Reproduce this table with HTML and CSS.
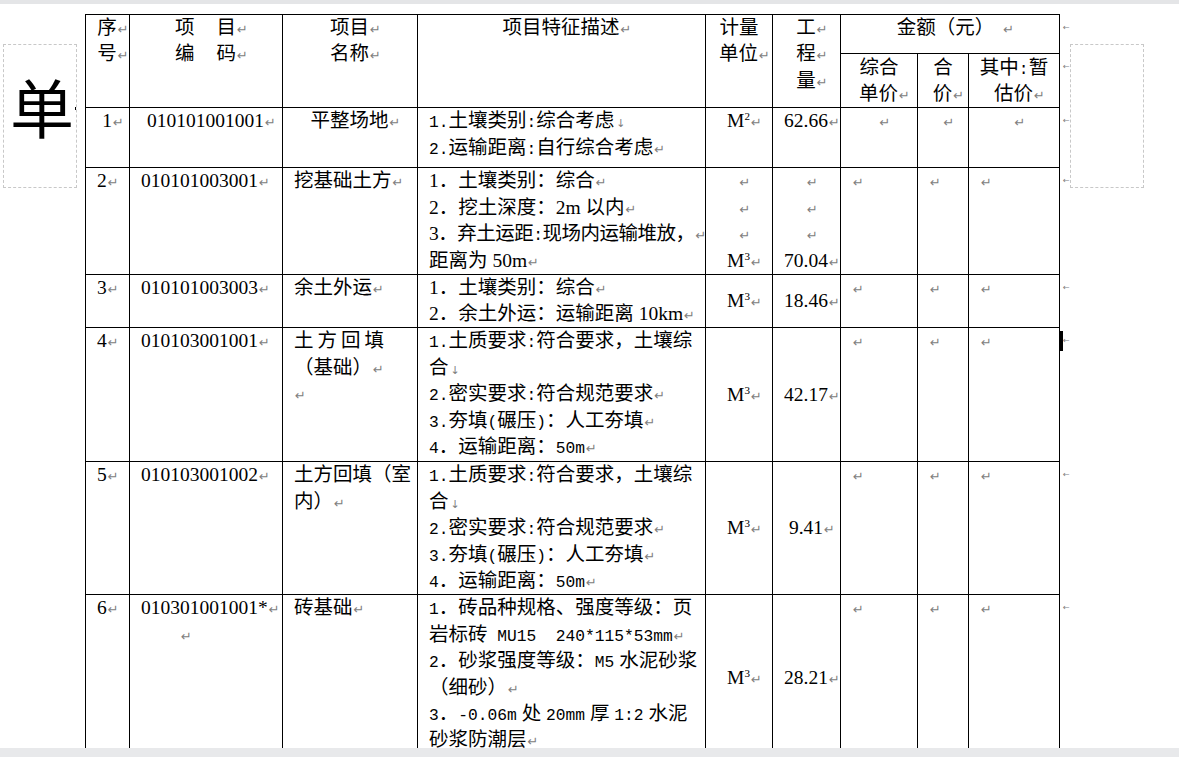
FILE: index.html
```html
<!DOCTYPE html>
<html lang="zh-CN">
<head>
<meta charset="utf-8">
<title>分部分项工程量清单</title>
<link rel="stylesheet" href="styles.css">
</head>
<body>
<div class="topbar"></div>
<div class="page">
  <div class="side side-left">
    <div class="tbox tbox-title"><span class="big">单</span><span class="dot"></span></div>
  </div>
  <table class="bill">
    <colgroup>
      <col class="w1"><col class="w2"><col class="w3"><col class="w4"><col class="w5"><col class="w6"><col class="w7"><col class="w8"><col class="w9"><col class="wm">
    </colgroup>
    <thead>
      <tr class="ha">
        <th rowspan="2">序<span class="pm">↵</span><br>号<span class="pm">↵</span></th>
        <th rowspan="2">项<span class="gap"></span>目<span class="pm">↵</span><br>编<span class="gap"></span>码<span class="pm">↵</span></th>
        <th rowspan="2">项目<span class="pm">↵</span><br>名称<span class="pm">↵</span></th>
        <th rowspan="2">项目特征描述<span class="pm">↵</span></th>
        <th rowspan="2">计量<br>单位<span class="pm">↵</span></th>
        <th rowspan="2">工<span class="pm">↵</span><br>程<span class="pm">↵</span><br>量<span class="pm">↵</span></th>
        <th colspan="3">金额（元）<span class="pm pm-far">↵</span></th>
        <td class="m"><span class="rm">←</span></td>
      </tr>
      <tr class="hb">
        <th class="sub">综合<br>单价<span class="pm">↵</span></th>
        <th class="sub">合<br>价<span class="pm">↵</span></th>
        <th class="sub">其中<span class="h">:</span>暂<br>估价<span class="pm">↵</span></th>
        <td class="m"><span class="rm">←</span></td>
      </tr>
    </thead>
    <tbody>
      <tr class="r1">
        <td class="c">1<span class="pm">↵</span></td>
        <td class="c">010101001001<span class="pm">↵</span></td>
        <td class="c">平整场地<span class="pm">↵</span></td>
        <td><span class="h">1.</span>土壤类别<span class="h">:</span>综合考虑<span class="lb">↓</span><br><span class="h">2.</span>运输距离<span class="h">:</span>自行综合考虑<span class="pm">↵</span></td>
        <td class="c">M<sup>2</sup><span class="pm">↵</span></td>
        <td class="c">62.66<span class="pm">↵</span></td>
        <td class="c"><span class="pm">↵</span></td>
        <td class="c"><span class="pm">↵</span></td>
        <td class="c"><span class="pm">↵</span></td>
        <td class="m"><span class="rm">←</span></td>
      </tr>
      <tr class="r2">
        <td>2<span class="pm">↵</span></td>
        <td>010101003001<span class="pm">↵</span></td>
        <td>挖基础土方<span class="pm">↵</span></td>
        <td>1．土壤类别：综合<span class="pm">↵</span><br>2．挖土深度：2m 以内<span class="pm">↵</span><br><span class="tight">3．弃土运距<span class="h">:</span>现场内运输堆放，</span><span class="pm">↵</span><br>距离为 50m<span class="pm">↵</span></td>
        <td class="c"><span class="pm">↵</span><br><span class="pm">↵</span><br><span class="pm">↵</span><br>M<sup>3</sup><span class="pm">↵</span></td>
        <td class="c"><span class="pm">↵</span><br><span class="pm">↵</span><br><span class="pm">↵</span><br>70.04<span class="pm">↵</span></td>
        <td><span class="pm">↵</span></td>
        <td><span class="pm">↵</span></td>
        <td><span class="pm">↵</span></td>
        <td class="m"><span class="rm">←</span></td>
      </tr>
      <tr class="r3">
        <td>3<span class="pm">↵</span></td>
        <td>010101003003<span class="pm">↵</span></td>
        <td>余土外运<span class="pm">↵</span></td>
        <td>1．土壤类别：综合<span class="pm">↵</span><br>2．余土外运：运输距离 10km<span class="pm">↵</span></td>
        <td class="c mid">M<sup>3</sup><span class="pm">↵</span></td>
        <td class="c mid">18.46<span class="pm">↵</span></td>
        <td><span class="pm">↵</span></td>
        <td><span class="pm">↵</span></td>
        <td><span class="pm">↵</span></td>
        <td class="m"><span class="rm">←</span></td>
      </tr>
      <tr class="r4">
        <td>4<span class="pm">↵</span></td>
        <td>010103001001<span class="pm">↵</span></td>
        <td><span class="spread">土方回填</span><br>（基础）<span class="pm">↵</span><br><span class="pm">↵</span></td>
        <td><span class="h">1.</span>土质要求<span class="h">:</span>符合要求，土壤综<br>合<span class="lb">↓</span><br><span class="h">2.</span>密实要求<span class="h">:</span>符合规范要求<span class="pm">↵</span><br><span class="h">3.</span>夯填<span class="h">(</span>碾压<span class="h">)</span>：人工夯填<span class="pm">↵</span><br><span class="h">4</span>．运输距离：<span class="h">50m</span><span class="pm">↵</span></td>
        <td class="c mid">M<sup>3</sup><span class="pm">↵</span></td>
        <td class="c mid">42.17<span class="pm">↵</span></td>
        <td><span class="pm">↵</span></td>
        <td><span class="pm">↵</span></td>
        <td><span class="pm">↵</span></td>
        <td class="m"><span class="cursor"></span><span class="rm">←</span></td>
      </tr>
      <tr class="r5">
        <td>5<span class="pm">↵</span></td>
        <td>010103001002<span class="pm">↵</span></td>
        <td>土方回填（室<br>内）<span class="pm">↵</span></td>
        <td><span class="h">1.</span>土质要求<span class="h">:</span>符合要求，土壤综<br>合<span class="lb">↓</span><br><span class="h">2.</span>密实要求<span class="h">:</span>符合规范要求<span class="pm">↵</span><br><span class="h">3.</span>夯填<span class="h">(</span>碾压<span class="h">)</span>：人工夯填<span class="pm">↵</span><br><span class="h">4</span>．运输距离：<span class="h">50m</span><span class="pm">↵</span></td>
        <td class="c mid">M<sup>3</sup><span class="pm">↵</span></td>
        <td class="c mid">9.41<span class="pm">↵</span></td>
        <td><span class="pm">↵</span></td>
        <td><span class="pm">↵</span></td>
        <td><span class="pm">↵</span></td>
        <td class="m"><span class="rm">←</span></td>
      </tr>
      <tr class="r6">
        <td>6<span class="pm">↵</span></td>
        <td>010301001001*<span class="pm">↵</span><br><span class="ind pm">↵</span></td>
        <td>砖基础<span class="pm">↵</span></td>
        <td><span class="h">1</span>．砖品种规格、强度等级：页<br>岩标砖<span class="h">&nbsp;MU15&nbsp;&nbsp;240*115*53mm</span><span class="pm">↵</span><br><span class="h">2</span>．砂浆强度等级：<span class="h">M5</span> 水泥砂浆<br>（细砂）<span class="pm">↵</span><br><span class="h">3</span>．<span class="h">-0.06m</span> 处 <span class="h">20mm</span> 厚 <span class="h">1:2</span> 水泥<br>砂浆防潮层<span class="pm">↵</span></td>
        <td class="c mid">M<sup>3</sup><span class="pm">↵</span></td>
        <td class="c mid">28.21<span class="pm">↵</span></td>
        <td><span class="pm">↵</span></td>
        <td><span class="pm">↵</span></td>
        <td><span class="pm">↵</span></td>
        <td class="m"><span class="rm">←</span></td>
      </tr>
    </tbody>
  </table>
  <div class="side side-right">
    <div class="tbox"></div>
  </div>
</div>
<div class="bottombar"></div>
</body>
</html>
```

FILE: styles.css
```css
* { box-sizing: border-box; }
html, body { margin: 0; padding: 0; background: #fff; }
body {
  width: 1179px;
  height: 757px;
  overflow: hidden;
  font-family: "Liberation Serif", "Noto Sans CJK SC", serif;
  color: #000;
}
.topbar { height: 4px; background: #e4e5e7; }
.bottombar {
  position: fixed;
  left: 0; right: 0; bottom: 0;
  height: 9px;
  background: #e8e9eb;
}
.page { display: flex; align-items: flex-start; }
.side { flex: 0 0 auto; }
.side-left { width: 85px; padding: 40px 0 0 3px; }
.side-right { padding-top: 40px; }
.tbox {
  width: 74px;
  height: 144px;
  border: 1px dashed #c8c8c8;
  overflow: hidden;
}
.tbox-title {
  display: flex;
  align-items: flex-start;
  padding: 28px 0 0 6px;
}
.big {
  font-family: "Noto Sans CJK SC", sans-serif;
  font-size: 64px;
  line-height: 64px;
  flex: 0 0 auto;
}
.dot {
  flex: 0 0 auto;
  width: 3px;
  height: 3px;
  margin: 34px 0 0 1px;
  background: #000;
}

.bill {
  border-collapse: collapse;
  table-layout: fixed;
  width: 984px;
  margin-top: 10px;
  font-size: 19.5px;
  line-height: 26.4px;
}
.w1 { width: 44px; }
.w2 { width: 153px; }
.w3 { width: 135px; }
.w4 { width: 288px; }
.w5 { width: 67px; }
.w6 { width: 68px; }
.w7 { width: 77px; }
.w8 { width: 51px; }
.w9 { width: 91px; }
.wm { width: 10px; }

.bill th, .bill td {
  border: 1px solid #000;
  padding: 0 11px;
  vertical-align: top;
  text-align: left;
  font-weight: normal;
  white-space: nowrap;
}
.bill th { text-align: center; padding: 0 2px; }
.bill th.sub { padding-top: 0.5px; }
.bill td.c { text-align: center; }
.bill td.mid { vertical-align: middle; }
.bill td.m {
  border: none;
  padding: 0 0 0 3px;
}
.ha { height: 39px; }
.hb { height: 54px; }
.r1 { height: 60px; }
.r2 { height: 107px; }
.r3 { height: 53px; }
.r3 td { line-height: 26px; }
.r4 { height: 134px; }
.r5 { height: 133px; }
.r6 { height: 166px; }

.gap { display: inline-block; width: 22px; }
.h {
  font-family: "Liberation Mono", monospace;
  font-size: 16.25px;
  line-height: 1;
}
.tight { letter-spacing: -0.5px; }
.spread { letter-spacing: 4px; }
sup {
  font-size: 11px;
  line-height: 0;
  vertical-align: 7px;
}
.pm {
  display: inline-block;
  width: 0;
  overflow: visible;
  font-family: "DejaVu Sans", sans-serif;
  font-size: 13px;
  line-height: 1;
  color: #808080;
  margin-left: 1px;
}
.pm-far { margin-left: 9px; }
.ind { margin-left: 40px; }
.lb {
  font-family: "DejaVu Sans", sans-serif;
  font-size: 11px;
  line-height: 1;
  color: #808080;
  margin-left: 2px;
}
.rm {
  display: inline-block;
  vertical-align: top;
  margin-top: 9px;
  font-family: "DejaVu Sans", sans-serif;
  font-size: 8px;
  line-height: 1;
  color: #808080;
}
.cursor {
  display: inline-block;
  width: 3px;
  height: 20px;
  margin: 3px 0 0 -3px;
  background: #000;
  vertical-align: top;
}
```
